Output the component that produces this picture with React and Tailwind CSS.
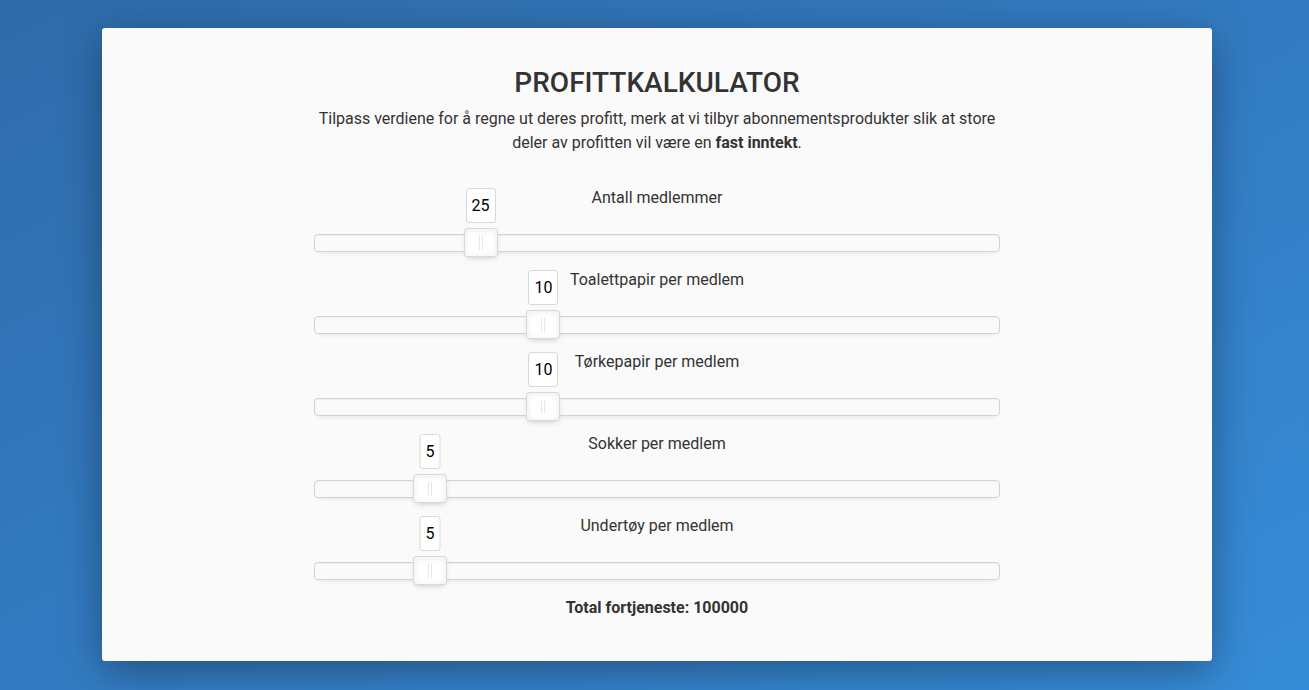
import { useState } from "react";

const sliders = [
    { label: "Antall medlemmer", value: 25, pct: 24.2 },
    { label: "Toalettpapir per medlem", value: 10, pct: 33.4 },
    { label: "Tørkepapir per medlem", value: 10, pct: 33.4 },
    { label: "Sokker per medlem", value: 5, pct: 16.8 },
    { label: "Undertøy per medlem", value: 5, pct: 16.8 },
];

const Slider = ({ label, value, pct }) => {
    return (
        <div className="flex flex-col gap-[24px]">
            <p className="text-center text-[16px] leading-[24px] text-[#333]">{label}</p>
            <div className="relative h-[18px] rounded-[4px] border border-[#d3d3d3] bg-[#fafafa] shadow-[inset_0_1px_1px_#f0f0f0,0_3px_6px_-5px_#bbb]">
                {/* handle + tooltip sit over the track */}
                <div className="absolute top-[-7px]" style={{ left: `${pct}%` }}>
                    <div className="relative -ml-[17px] flex h-[29px] w-[34px] items-center justify-center gap-[2px] rounded-[3px] border border-[#d9d9d9] bg-white shadow-[inset_0_0_1px_#fff,inset_0_1px_7px_#ebebeb,0_3px_6px_-3px_#bbb]">
                        <span className="h-[14px] w-px bg-[#e8e7e6]" />
                        <span className="h-[14px] w-px bg-[#e8e7e6]" />
                        <div className="absolute bottom-[33px] left-1/2 -translate-x-1/2 whitespace-nowrap rounded-[3px] border border-[#d9d9d9] bg-white px-[5px] py-[5px] text-[16px] leading-[23px] text-black">
                            {value}
                        </div>
                    </div>
                </div>
            </div>
        </div>
    );
};

const App = () => {
    const [items] = useState(sliders);

    return (
        <div className="flex min-h-[690px] w-full justify-center bg-gradient-to-br from-[#2f6bab] to-[#368cd8] pl-[5px] pt-[28px] font-['Roboto',sans-serif]">
            <div className="flex h-fit w-[1110px] justify-center rounded-[3px] bg-[#fafafa] pb-[41px] pt-[32px] shadow-[0_10px_40px_rgba(0,0,0,0.35)]">
                <div className="flex w-[686px] flex-col">
                    <h1 className="text-center text-[28px] font-medium leading-[46px] text-[#333]">PROFITTKALKULATOR</h1>
                    <p className="mt-[1px] text-center text-[16px] leading-[24px] text-[#333]">
                        Tilpass verdiene for å regne ut deres profitt, merk at vi tilbyr abonnementsprodukter slik at store deler av profitten vil være en <b className="font-bold">fast inntekt</b>.
                    </p>
                    <div className="mt-[31px] flex flex-col gap-[16px]">
                        {items.map((s) => (
                            <Slider key={s.label} {...s} />
                        ))}
                    </div>
                    <p className="mt-[16px] text-center text-[16px] font-bold leading-[24px] text-[#333]">Total fortjeneste: 100000</p>
                </div>
            </div>
        </div>
    );
};

export default App;
